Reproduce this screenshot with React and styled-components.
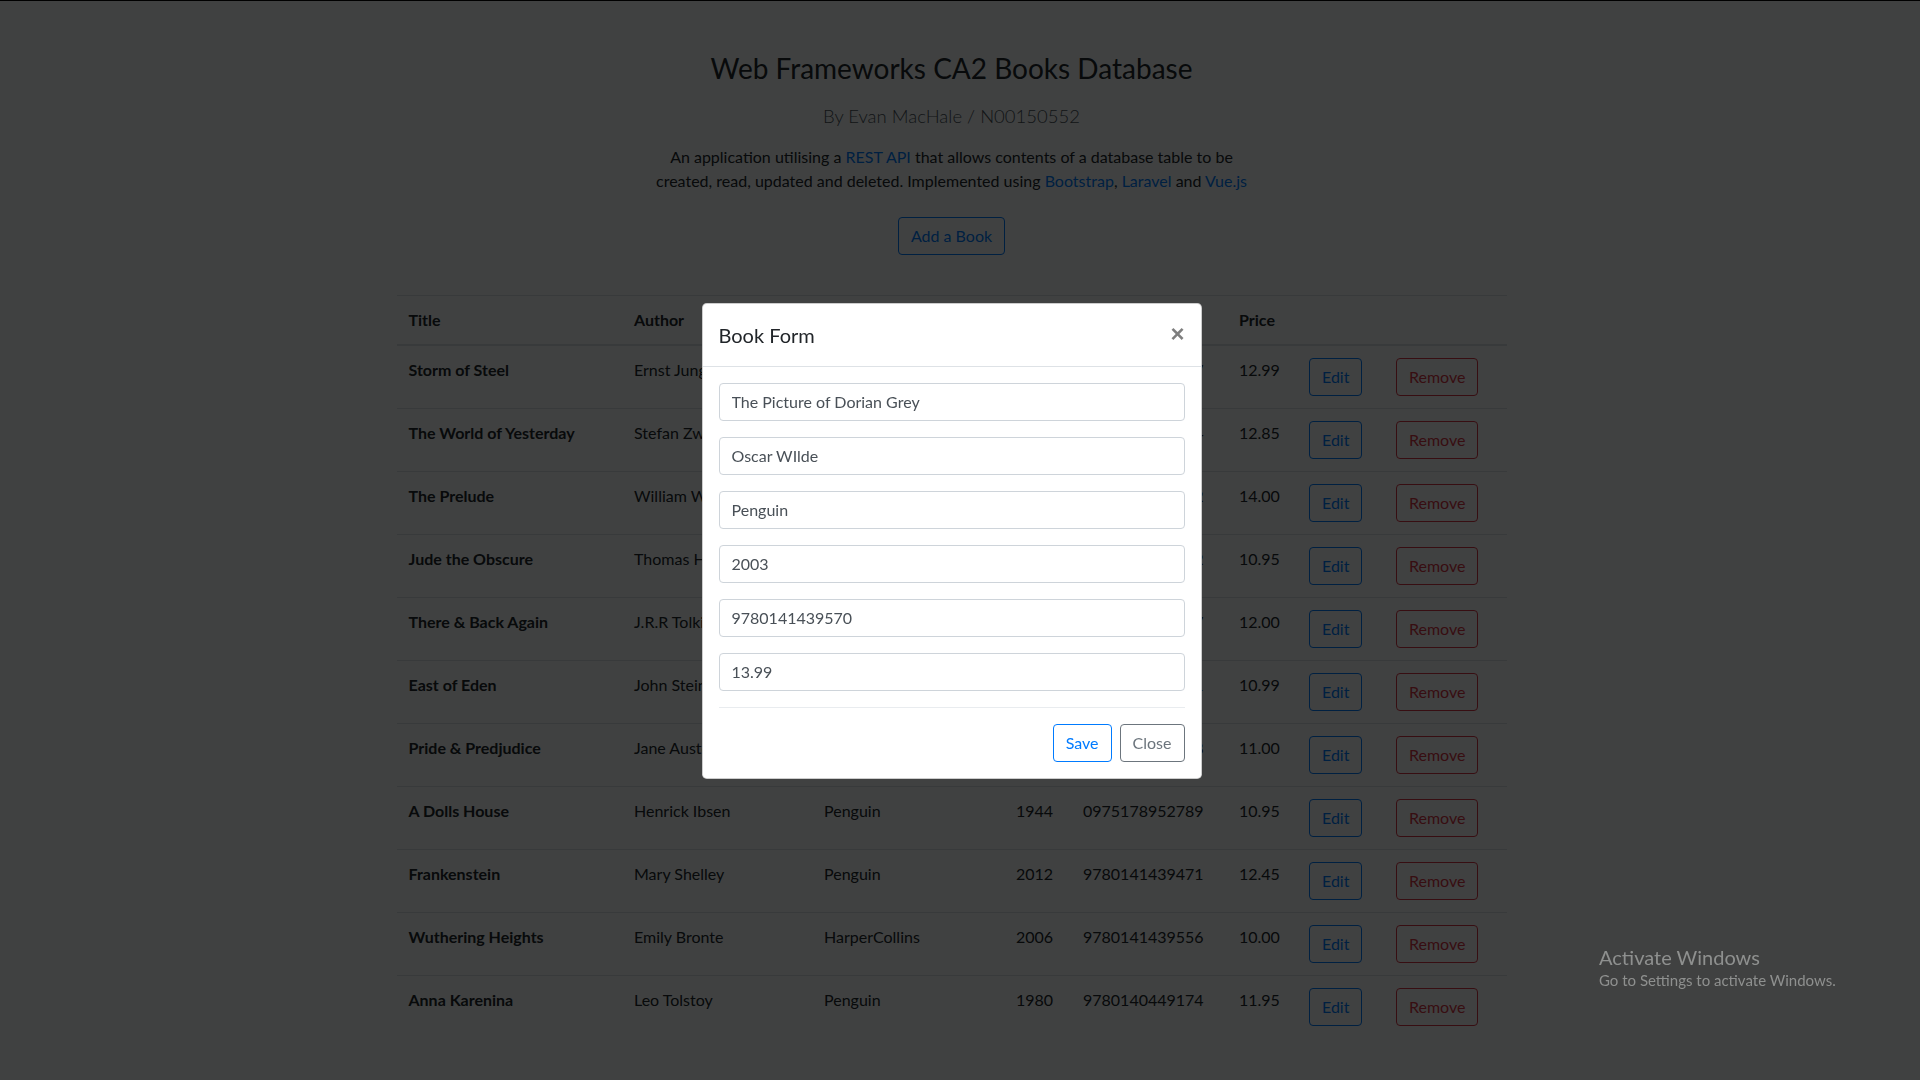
import React from "react";
import styled, { createGlobalStyle } from "styled-components";

const GlobalStyle = createGlobalStyle`
  *, *::before, *::after { box-sizing: border-box; }
  html, body { margin: 0; padding: 0; }
  body {
    padding-right: 17px;
    background: #ffffff;
    color: #212529;
    font-family: Lato, "Open Sans", "Liberation Sans", sans-serif;
    font-size: 16px;
    line-height: 1.5;
    overflow: hidden;
    height: 1080px;
  }
`;

const Container = styled.div`
  max-width: 1140px;
  margin: 0 auto;
  padding: 52px 15px 0;
`;

const Title = styled.h3`
  margin: 0 0 18px;
  font-size: 28px;
  line-height: 1.2;
  font-weight: 400;
  text-align: center;
  color: #212529;
`;

const Subtitle = styled.h5`
  margin: 0 0 17px;
  font-size: 18.5px;
  line-height: 24px;
  font-weight: 300;
  text-align: center;
  color: #495057;
`;

const Intro = styled.p`
  margin: 0 0 24px;
  text-align: center;
  font-size: 16px;
  line-height: 24px;
`;

const Link = styled.a`
  color: #007bff;
  text-decoration: none;
`;

const Centered = styled.div`
  display: flex;
  justify-content: center;
  margin-bottom: 40px;
`;

const OutlineButton = styled.button`
  font-family: inherit;
  font-size: 16px;
  line-height: 24px;
  padding: 6px 12px;
  border-radius: 4px;
  background: transparent;
  border: 1px solid ${(p) => p.$color};
  color: ${(p) => p.$color};
  cursor: pointer;
  white-space: nowrap;
`;

const Table = styled.table`
  width: 100%;
  border-collapse: collapse;
  table-layout: fixed;
  margin-bottom: 16px;
`;

const HeadCell = styled.th`
  text-align: left;
  vertical-align: bottom;
  padding: 12px;
  font-weight: 700;
  border-top: 1px solid #dee2e6;
  border-bottom: 2px solid #dee2e6;
  width: ${(p) => p.$w}px;
`;

const RowHead = styled.th`
  text-align: left;
  vertical-align: top;
  padding: 12px;
  font-weight: 700;
  border-top: 1px solid #dee2e6;
  white-space: nowrap;
`;

const Cell = styled.td`
  vertical-align: top;
  padding: 12px;
  border-top: 1px solid #dee2e6;
  white-space: nowrap;
`;

const Backdrop = styled.div`
  position: fixed;
  inset: 0;
  padding-right: 17px;
  background: rgba(0, 2, 1, 0.75);
  border-top: 1px solid #000;
  display: flex;
  align-items: center;
  justify-content: center;
`;

const ModalBox = styled.div`
  width: 500px;
  background: #fff;
  border: 1px solid rgba(0, 0, 0, 0.2);
  border-radius: 4.8px;
  display: flex;
  flex-direction: column;
`;

const ModalHeader = styled.div`
  display: flex;
  align-items: flex-start;
  justify-content: space-between;
  padding: 16px;
  border-bottom: 1px solid #dee2e6;
`;

const ModalTitle = styled.h5`
  margin: 0;
  font-size: 20px;
  line-height: 30px;
  font-weight: 400;
  color: #212529;
`;

const CloseX = styled.button`
  padding: 18px 16px 14px;
  margin: -16px -16px -16px auto;
  background: transparent;
  border: 0;
  font-family: "Liberation Sans", Arial, sans-serif;
  font-size: 24px;
  font-weight: 700;
  line-height: 1;
  color: #000;
  opacity: 0.5;
  text-shadow: 0 1px 0 #fff;
  cursor: pointer;
`;

const ModalBody = styled.form`
  padding: 16px;
  display: flex;
  flex-direction: column;
  gap: 16px;
`;

const Input = styled.input`
  display: block;
  width: 100%;
  height: 38px;
  padding: 6px 12px;
  font-family: inherit;
  font-size: 16px;
  line-height: 24px;
  color: #495057;
  background: #fff;
  border: 1px solid #ced4da;
  border-radius: 4px;
  outline: none;
`;

const FormFooter = styled.div`
  border-top: 1px solid #e9ecef;
  padding-top: 16px;
  display: flex;
  justify-content: flex-end;
  gap: 8px;
`;

const Watermark = styled.div`
  position: fixed;
  left: 1599px;
  top: 945px;
  color: #8e908f;
  font-family: Lato, "Open Sans", sans-serif;
  pointer-events: none;
`;

const WatermarkTitle = styled.div`
  font-size: 20px;
  line-height: 24px;
  font-weight: 400;
`;

const WatermarkText = styled.div`
  margin-top: 2px;
  font-size: 15px;
  line-height: 18px;
`;

const columns = [
  ["Title", 225.5],
  ["Author", 190],
  ["Publisher", 192],
  ["Year", 67],
  ["ISBN", 156],
  ["Price", 70],
  ["", 87],
  ["", 122.5],
];

const books = [
  ["Storm of Steel", "Ernst Junger", "Penguin", "2004", "9780141186917", "12.99"],
  ["The World of Yesterday", "Stefan Zweig", "Pushkin Press", "2009", "9781906548124", "12.85"],
  ["The Prelude", "William Wordsworth", "Penguin", "1995", "9780140433692", "14.00"],
  ["Jude the Obscure", "Thomas Hardy", "Penguin", "1998", "9780140435382", "10.95"],
  ["There & Back Again", "J.R.R Tolkien", "HarperCollins", "1937", "9780261102217", "12.00"],
  ["East of Eden", "John Steinbeck", "Penguin", "2000", "9780141185071", "10.99"],
  ["Pride & Predjudice", "Jane Austen", "Penguin", "2003", "9780141439518", "11.00"],
  ["A Dolls House", "Henrick Ibsen", "Penguin", "1944", "0975178952789", "10.95"],
  ["Frankenstein", "Mary Shelley", "Penguin", "2012", "9780141439471", "12.45"],
  ["Wuthering Heights", "Emily Bronte", "HarperCollins", "2006", "9780141439556", "10.00"],
  ["Anna Karenina", "Leo Tolstoy", "Penguin", "1980", "9780140449174", "11.95"],
];

const formValues = [
  "The Picture of Dorian Grey",
  "Oscar WIlde",
  "Penguin",
  "2003",
  "9780141439570",
  "13.99",
];

export default function App() {
  return (
    <>
      <GlobalStyle />
      <Container>
        <Title>Web Frameworks CA2 Books Database</Title>
        <Subtitle>By Evan MacHale / N00150552</Subtitle>
        <Intro>
          An application utilising a <Link href="#">REST API</Link> that allows contents of a database table to be
          <br />
          created, read, updated and deleted. Implemented using <Link href="#">Bootstrap</Link>,{" "}
          <Link href="#">Laravel</Link> and <Link href="#">Vue.js</Link>
        </Intro>
        <Centered>
          <OutlineButton $color="#007bff">Add a Book</OutlineButton>
        </Centered>
        <Table>
          <thead>
            <tr>
              {columns.map(([label, w], i) => (
                <HeadCell key={i} $w={w}>
                  {label}
                </HeadCell>
              ))}
            </tr>
          </thead>
          <tbody>
            {books.map((b) => (
              <tr key={b[0]}>
                <RowHead>{b[0]}</RowHead>
                <Cell>{b[1]}</Cell>
                <Cell>{b[2]}</Cell>
                <Cell>{b[3]}</Cell>
                <Cell>{b[4]}</Cell>
                <Cell>{b[5]}</Cell>
                <Cell>
                  <OutlineButton $color="#007bff">Edit</OutlineButton>
                </Cell>
                <Cell>
                  <OutlineButton $color="#dc3545">Remove</OutlineButton>
                </Cell>
              </tr>
            ))}
          </tbody>
        </Table>
      </Container>

      <Backdrop>
        <ModalBox>
          <ModalHeader>
            <ModalTitle>Book Form</ModalTitle>
            <CloseX type="button" aria-label="Close">
              ×
            </CloseX>
          </ModalHeader>
          <ModalBody onSubmit={(e) => e.preventDefault()}>
            {formValues.map((v, i) => (
              <Input key={i} defaultValue={v} />
            ))}
            <FormFooter>
              <OutlineButton type="button" $color="#007bff">Save</OutlineButton>
              <OutlineButton type="button" $color="#6c757d">Close</OutlineButton>
            </FormFooter>
          </ModalBody>
        </ModalBox>
      </Backdrop>

      <Watermark>
        <WatermarkTitle>Activate Windows</WatermarkTitle>
        <WatermarkText>Go to Settings to activate Windows.</WatermarkText>
      </Watermark>
    </>
  );
}
